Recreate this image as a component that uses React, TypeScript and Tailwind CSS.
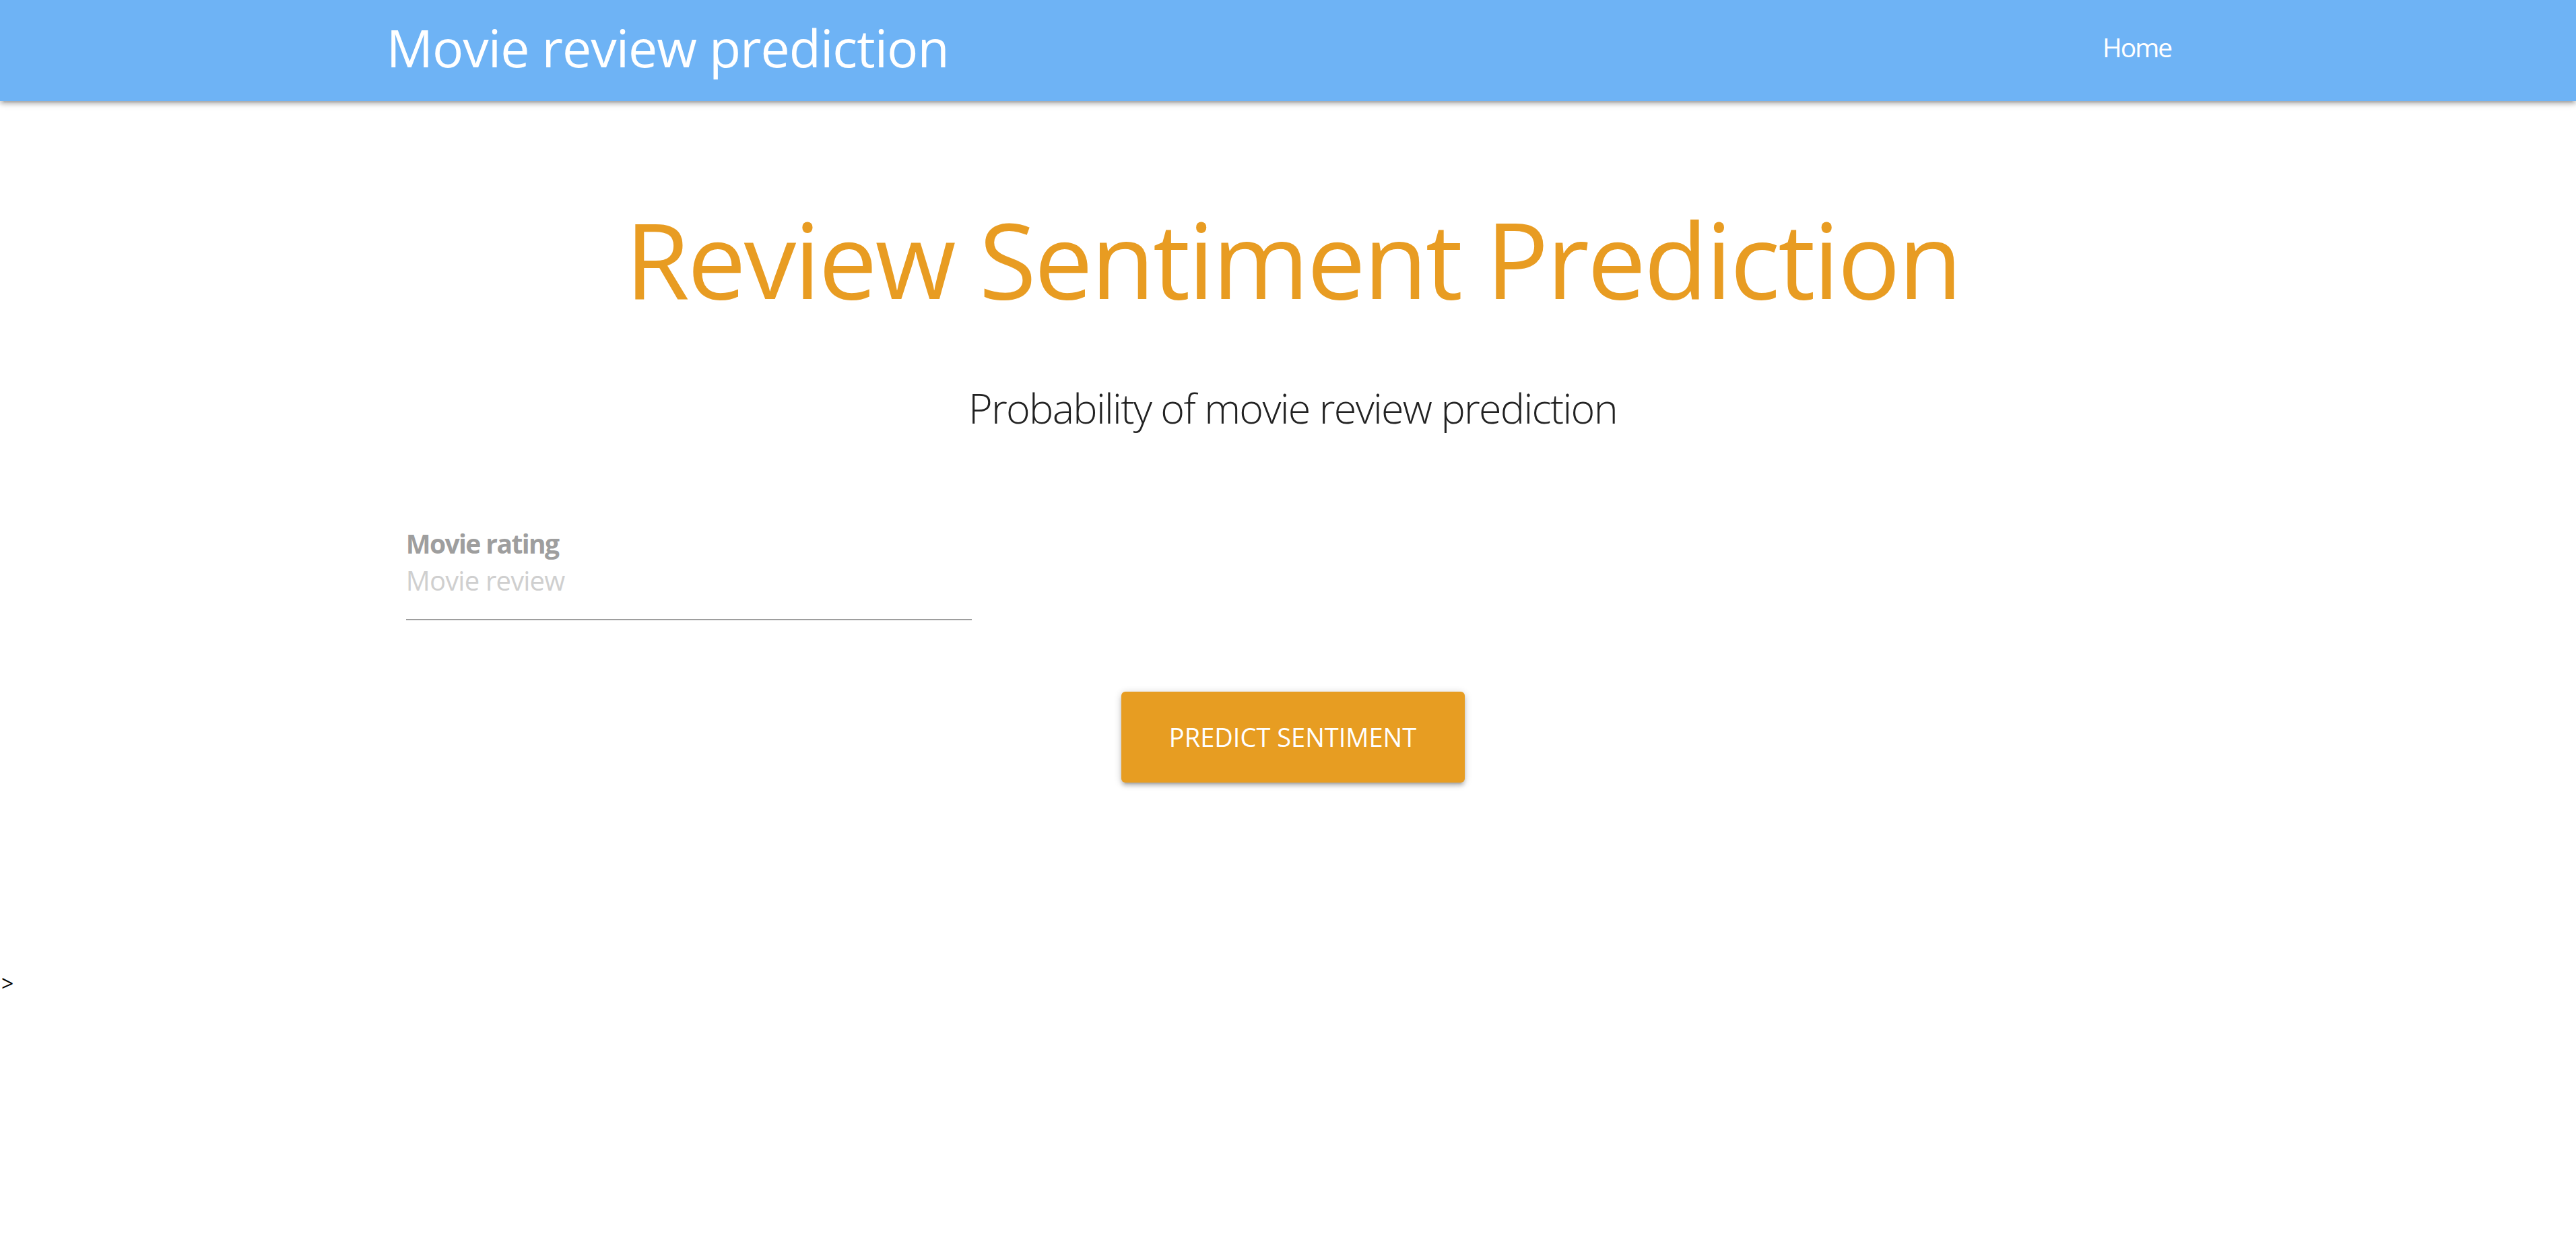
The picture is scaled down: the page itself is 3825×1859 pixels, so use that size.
export default function App() {
  return (
    <div className="min-h-screen bg-white font-['Open_Sans',sans-serif]">
      {/* Barra de navegação */}
      <nav className="h-[150px] bg-[#6eb3f5] shadow-[0_5px_5px_0_rgba(0,0,0,0.14),0_7px_2px_-5px_rgba(0,0,0,0.12),0_2px_12px_0_rgba(0,0,0,0.2)]">
        <div className="mx-auto flex h-full w-[70%] items-center justify-between pb-[10px]">
          <a href="#" className="text-[77px] leading-none tracking-[-1px] text-white">
            Movie review prediction
          </a>
          <ul className="flex pr-[27px]">
            <li>
              <a href="#" className="text-[39px] leading-none tracking-[-2px] text-white">
                Home
              </a>
            </li>
          </ul>
        </div>
      </nav>

      {/* Conteúdo */}
      <main className="mx-auto w-[70%] pl-[14px]">
        <h1 className="mt-[156px] text-center text-[155px] leading-none tracking-[-3px] text-[#e89c22]">
          Review Sentiment Prediction
        </h1>
        <h5 className="mt-[114px] text-center text-[61px] font-light leading-none tracking-[-1.7px] text-[#222]">
          Probability of movie review prediction
        </h5>

        <form className="mt-[151px] flex flex-col">
          <div className="w-[855px] pl-[15px]">
            <label className="block text-[39px] font-bold leading-none tracking-[-1.6px] text-[#9e9e9e]">
              Movie rating
            </label>
            <input
              type="text"
              placeholder="Movie review"
              className="mt-[15px] h-[80px] w-full border-b-2 border-[#9e9e9e] pb-[38px] text-[40px] tracking-[-0.8px] outline-none placeholder:text-[#cfcfcf]"
            />
          </div>
          <div className="mt-[106px] flex justify-center">
            <button
              type="button"
              className="flex h-[135px] w-[510px] items-center justify-center rounded-[6px] bg-[#e79d22] text-[38px] uppercase text-white shadow-[0_5px_5px_0_rgba(0,0,0,0.14),0_7px_2px_-5px_rgba(0,0,0,0.12),0_2px_12px_0_rgba(0,0,0,0.2)]"
            >
              Predict Sentiment
            </button>
          </div>
        </form>
      </main>

      <div className="mt-[282px] pl-[2px] text-[32px] leading-none text-black">&gt;</div>
    </div>
  )
}
